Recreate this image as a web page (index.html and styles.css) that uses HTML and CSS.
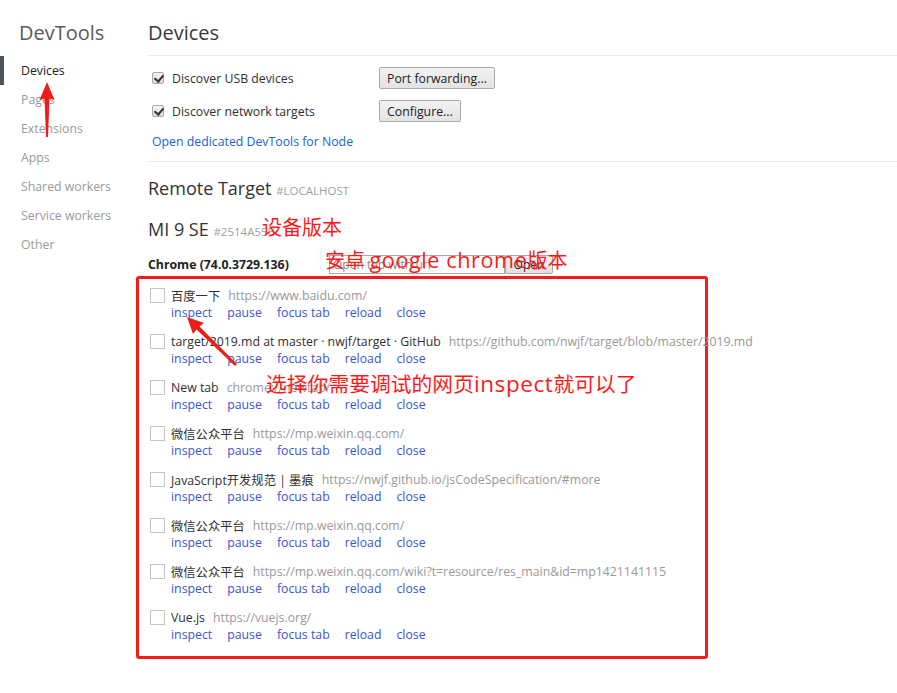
FILE: index.html
```html
<!DOCTYPE html>
<html>
<head>
<meta charset="utf-8">
<link rel="stylesheet" href="styles.css">
</head>
<body>
<div class="page">
  <aside class="sidebar">
    <div class="side-title">DevTools</div>
    <nav class="nav">
      <div class="nav-item active">Devices</div>
      <div class="nav-item">Pages</div>
      <div class="nav-item">Extensions</div>
      <div class="nav-item">Apps</div>
      <div class="nav-item">Shared workers</div>
      <div class="nav-item">Service workers</div>
      <div class="nav-item">Other</div>
    </nav>
  </aside>
  <main class="main">
    <div class="main-title">Devices</div>
    <div class="settings">
      <div class="setting-row">
        <label class="check"><span class="cb checked"></span>Discover USB devices</label>
        <button class="btn">Port forwarding...</button>
      </div>
      <div class="setting-row">
        <label class="check"><span class="cb checked"></span>Discover network targets</label>
        <button class="btn">Configure...</button>
      </div>
      <a class="node-link">Open dedicated DevTools for Node</a>
    </div>
    <div class="section-title">Remote Target <span class="sub">#LOCALHOST</span></div>
    <div class="device-title">MI 9 SE <span class="sub">#2514A55B</span></div>
    <div class="browser-row">
      <span class="browser-name">Chrome (74.0.3729.136)</span>
      <span class="url-input">Open tab with url</span><span class="open-btn">Open</span>
    </div>
    <div class="targets">
      <div class="target">
        <div class="t-line"><span class="tcb"></span><span class="t-name">百度一下</span><span class="t-url">https://www.baidu.com/</span></div>
        <div class="actions"><a>inspect</a><a>pause</a><a>focus tab</a><a>reload</a><a>close</a></div>
      </div>
      <div class="target">
        <div class="t-line"><span class="tcb"></span><span class="t-name">target/2019.md at master · nwjf/target · GitHub</span><span class="t-url">https://github.com/nwjf/target/blob/master/2019.md</span></div>
        <div class="actions"><a>inspect</a><a>pause</a><a>focus tab</a><a>reload</a><a>close</a></div>
      </div>
      <div class="target">
        <div class="t-line"><span class="tcb"></span><span class="t-name">New tab</span><span class="t-url">chrome://newtab/</span></div>
        <div class="actions"><a>inspect</a><a>pause</a><a>focus tab</a><a>reload</a><a>close</a></div>
      </div>
      <div class="target">
        <div class="t-line"><span class="tcb"></span><span class="t-name">微信公众平台</span><span class="t-url">https://mp.weixin.qq.com/</span></div>
        <div class="actions"><a>inspect</a><a>pause</a><a>focus tab</a><a>reload</a><a>close</a></div>
      </div>
      <div class="target">
        <div class="t-line"><span class="tcb"></span><span class="t-name">JavaScript开发规范 | 墨痕</span><span class="t-url">https://nwjf.github.io/jsCodeSpecification/#more</span></div>
        <div class="actions"><a>inspect</a><a>pause</a><a>focus tab</a><a>reload</a><a>close</a></div>
      </div>
      <div class="target">
        <div class="t-line"><span class="tcb"></span><span class="t-name">微信公众平台</span><span class="t-url">https://mp.weixin.qq.com/</span></div>
        <div class="actions"><a>inspect</a><a>pause</a><a>focus tab</a><a>reload</a><a>close</a></div>
      </div>
      <div class="target">
        <div class="t-line"><span class="tcb"></span><span class="t-name">微信公众平台</span><span class="t-url">https://mp.weixin.qq.com/wiki?t=resource/res_main&amp;id=mp1421141115</span></div>
        <div class="actions"><a>inspect</a><a>pause</a><a>focus tab</a><a>reload</a><a>close</a></div>
      </div>
      <div class="target">
        <div class="t-line"><span class="tcb"></span><span class="t-name">Vue.js</span><span class="t-url">https://vuejs.org/</span></div>
        <div class="actions"><a>inspect</a><a>pause</a><a>focus tab</a><a>reload</a><a>close</a></div>
      </div>
    </div>
  </main>

  <div class="note note-device">设备版本</div>
  <div class="note note-chrome">安卓 <span class="latin">google chrome</span>版本</div>
  <div class="note note-inspect">选择你需要调试的网页<span class="latin">inspect</span>就可以了</div>

  <svg class="arrow arrow-nav" width="30" height="70" viewBox="0 0 30 70">
    <polygon fill="#f01c1c" points="15,1 22.5,19 17.5,17.5 16,56 14,56 12.5,17.5 7.5,19"/>
  </svg>
  <svg class="arrow arrow-inspect" width="70" height="70" viewBox="0 0 70 70">
    <polygon fill="#f01c1c" points="2,2 19,8 14.5,11.5 52,49 50,51 11.5,14.5 8,19"/>
  </svg>
</div>
</body>
</html>
```

FILE: styles.css
```css
* { box-sizing: border-box; }
html, body { margin: 0; padding: 0; background: #fff; }
body {
  font-family: "Open Sans", "Noto Sans CJK SC", sans-serif;
  font-size: 12.3px;
  color: #303030;
}
.page {
  position: relative;
  display: flex;
  width: 897px;
  height: 693px;
  overflow: hidden;
}
.sidebar {
  width: 148px;
  flex: none;
}
.side-title {
  margin-top: 21px;
  padding-left: 19px;
  font-size: 20px;
  line-height: 24px;
  color: #5a5a5a;
}
.nav { margin-top: 11px; }
.nav-item {
  height: 29px;
  line-height: 29px;
  padding-left: 17px;
  color: #9a9a9a;
  border-left: 4px solid transparent;
}
.nav-item.active {
  color: #222;
  border-left-color: #4b535d;
}
.main {
  flex: 1;
  min-width: 0;
}
.main-title {
  margin-top: 21px;
  font-size: 20px;
  line-height: 24px;
  color: #3a3a3a;
  padding-bottom: 10px;
  border-bottom: 1px solid #e8e8e8;
}
.settings {
  padding: 11px 0 10px 4px;
  border-bottom: 1px solid #e8e8e8;
}
.setting-row {
  display: flex;
  align-items: center;
  height: 22px;
  margin-bottom: 11px;
}
.check {
  display: flex;
  align-items: center;
  width: 227px;
  color: #303030;
}
.cb {
  width: 12px;
  height: 12px;
  margin-right: 8px;
  border: 1px solid #a8a8a8;
  border-radius: 2px;
  background: linear-gradient(#f4f4f4, #dcdcdc);
  position: relative;
}
.cb.checked::after {
  content: "";
  position: absolute;
  left: 3px;
  top: 0px;
  width: 4px;
  height: 7px;
  border-right: 2px solid #333;
  border-bottom: 2px solid #333;
  transform: rotate(40deg);
}
.btn {
  font-family: inherit;
  font-size: 12.3px;
  color: #222;
  height: 22px;
  padding: 0 7px;
  border: 1px solid #acacac;
  border-radius: 2px;
  background: linear-gradient(#f2f2f2, #e3e3e3);
}
.node-link {
  display: block;
  line-height: 18px;
  margin-top: 2px;
  color: #2062d6;
}
.section-title {
  margin-top: 15px;
  font-size: 18px;
  line-height: 22px;
  color: #333;
}
.sub {
  font-size: 11.5px;
  color: #a0a0a0;
}
.device-title {
  margin-top: 16px;
  font-size: 18px;
  line-height: 22px;
  color: #333;
}
.browser-row {
  display: flex;
  align-items: center;
  margin-top: 11px;
  height: 20px;
}
.browser-name {
  font-weight: bold;
  color: #222;
  width: 181px;
}
.url-input {
  width: 176px;
  height: 19px;
  border: 1px solid #a8a8a8;
  padding-left: 3px;
  font-size: 12px;
  line-height: 17px;
  color: #888;
}
.open-btn {
  width: 48px;
  height: 19px;
  border: 1px solid #a8a8a8;
  border-radius: 2px;
  background: linear-gradient(#f2f2f2, #e0e0e0);
  text-align: center;
  font-size: 12px;
  line-height: 17px;
  color: #222;
}
.targets {
  margin: 2px 0 0 -12px;
  width: 572px;
  height: 383px;
  border: 3px solid #f41d1d;
  border-radius: 3px;
  padding: 8px 0 0 11px;
}
.target {
  height: 46px;
}
.t-line {
  display: flex;
  align-items: center;
  height: 17px;
  white-space: nowrap;
}
.tcb {
  width: 15px;
  height: 15px;
  border: 1px solid #c4c4c4;
  margin-right: 6px;
  flex: none;
}
.t-name { color: #303030; margin-right: 8px; }
.t-url { color: #999; }
.actions {
  display: flex;
  gap: 15px;
  padding-left: 21px;
  height: 17px;
  line-height: 17px;
}
.actions a { color: #3a55d2; }
.note {
  position: absolute;
  font-family: "Noto Sans CJK SC", sans-serif;
  color: #ff1a1a;
  white-space: nowrap;
  line-height: 1;
}
.note .latin {
  font-family: "Open Sans", sans-serif;
  letter-spacing: 0.6px;
  font-size: 1.08em;
}
.note-device { left: 262px; top: 217px; font-size: 20px; }
.note-chrome { left: 325px; top: 249px; font-size: 20px; }
.note-inspect { left: 266px; top: 373px; font-size: 20.8px; }
.arrow { position: absolute; }
.arrow-nav { left: 32px; top: 81px; }
.arrow-inspect { left: 185px; top: 315px; }
```
